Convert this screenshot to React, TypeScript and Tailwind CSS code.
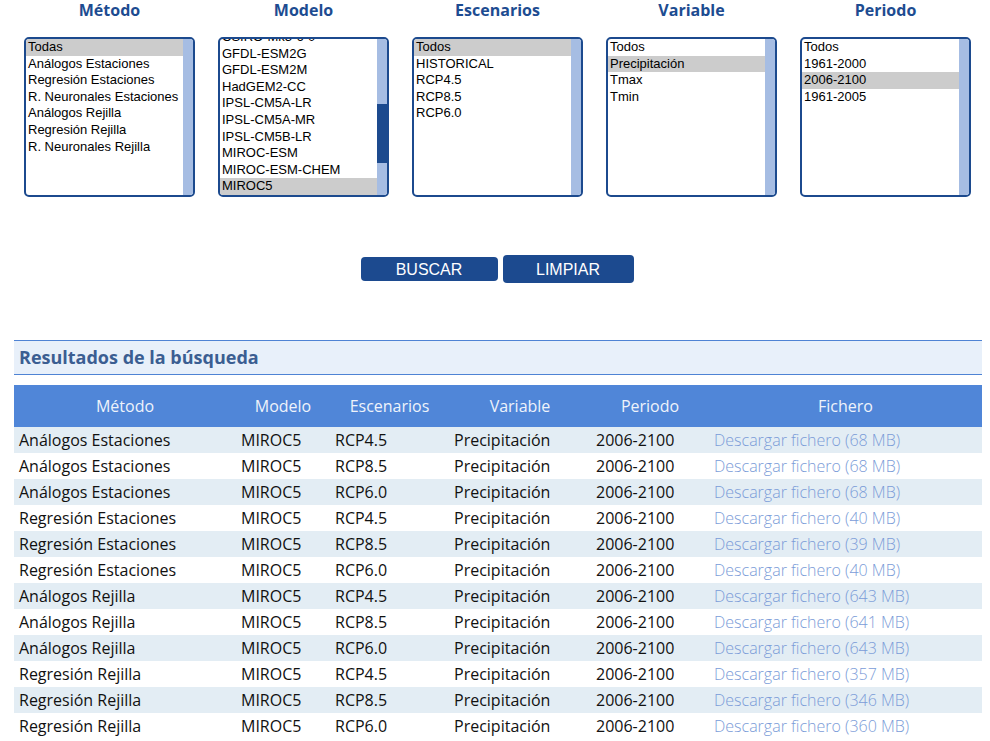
import React from "react";

type Col = {
  title: string;
  items: string[];
  selected: string;
  bottom?: boolean;
  thumb?: [number, number];
};

const cols: Col[] = [
  {
    title: "Método",
    items: [
      "Todas",
      "Análogos Estaciones",
      "Regresión Estaciones",
      "R. Neuronales Estaciones",
      "Análogos Rejilla",
      "Regresión Rejilla",
      "R. Neuronales Rejilla",
    ],
    selected: "Todas",
  },
  {
    title: "Modelo",
    items: [
      "CNRM-CM5",
      "CSIRO-Mk3-6-0",
      "GFDL-ESM2G",
      "GFDL-ESM2M",
      "HadGEM2-CC",
      "IPSL-CM5A-LR",
      "IPSL-CM5A-MR",
      "IPSL-CM5B-LR",
      "MIROC-ESM",
      "MIROC-ESM-CHEM",
      "MIROC5",
    ],
    selected: "MIROC5",
    bottom: true,
    thumb: [65, 59],
  },
  {
    title: "Escenarios",
    items: ["Todos", "HISTORICAL", "RCP4.5", "RCP8.5", "RCP6.0"],
    selected: "Todos",
  },
  {
    title: "Variable",
    items: ["Todos", "Precipitación", "Tmax", "Tmin"],
    selected: "Precipitación",
  },
  {
    title: "Periodo",
    items: ["Todos", "1961-2000", "2006-2100", "1961-2005"],
    selected: "2006-2100",
  },
];

const rows: string[][] = [
  ["Análogos Estaciones", "RCP4.5", "68 MB"],
  ["Análogos Estaciones", "RCP8.5", "68 MB"],
  ["Análogos Estaciones", "RCP6.0", "68 MB"],
  ["Regresión Estaciones", "RCP4.5", "40 MB"],
  ["Regresión Estaciones", "RCP8.5", "39 MB"],
  ["Regresión Estaciones", "RCP6.0", "40 MB"],
  ["Análogos Rejilla", "RCP4.5", "643 MB"],
  ["Análogos Rejilla", "RCP8.5", "641 MB"],
  ["Análogos Rejilla", "RCP6.0", "643 MB"],
  ["Regresión Rejilla", "RCP4.5", "357 MB"],
  ["Regresión Rejilla", "RCP8.5", "346 MB"],
  ["Regresión Rejilla", "RCP6.0", "360 MB"],
];

const widths = ["w-[222px]", "w-[94px]", "w-[119px]", "w-[142px]", "w-[118px]", "w-[273px]"];
const headers = ["Método", "Modelo", "Escenarios", "Variable", "Periodo", "Fichero"];

function ListBox({ col }: { col: Col }) {
  return (
    <div className="flex w-[171px] flex-col items-center">
      <div className="text-[16px] font-bold leading-[20px] text-[#1d4c91]">{col.title}</div>
      <div className="mt-[17px] flex h-[160px] w-[171px] overflow-hidden rounded-[5px] border-2 border-[#1c4a8e] bg-white">
        <div
          className={
            "flex flex-1 flex-col overflow-hidden " + (col.bottom ? "justify-end" : "justify-start")
          }
        >
          {col.items.map((it) => (
            <div
              key={it}
              className={
                "h-[16.6px] shrink-0 whitespace-nowrap pl-[2px] text-[13px] leading-[16.6px] text-black " +
                (it === col.selected ? "bg-[#cccccc] text-[#222]" : "")
              }
              style={{ fontFamily: '"Liberation Sans", Arial, sans-serif' }}
            >
              {it}
            </div>
          ))}
        </div>
        <div className="flex w-[10px] shrink-0 flex-col bg-[#a6bde3]">
          {col.thumb && (
            <>
              <div className="h-[65px] shrink-0" />
              <div className="h-[59px] shrink-0 bg-[#1c4a8e]" />
            </>
          )}
        </div>
      </div>
    </div>
  );
}

export default function App() {
  return (
    <div
      className="w-[990px] bg-white"
      style={{ fontFamily: '"Open Sans", "Liberation Sans", sans-serif' }}
    >
      <div className="flex gap-[23px] pl-[24px]">
        {cols.map((c) => (
          <ListBox key={c.title} col={c} />
        ))}
      </div>

      <div
        className="mt-[58px] flex items-center justify-center gap-[5px] pl-[4px]"
        style={{ fontFamily: '"Liberation Sans", Arial, sans-serif' }}
      >
        <button className="flex h-[24px] w-[137px] items-center justify-center rounded-[4px] bg-[#1c4a8f] pt-[1px] text-[16px] text-white">
          BUSCAR
        </button>
        <button className="flex h-[28px] w-[131px] items-center justify-center rounded-[4px] bg-[#1c4a8f] pt-[1px] text-[16px] text-white">
          LIMPIAR
        </button>
      </div>

      <div className="ml-[14px] mt-[57px] w-[968px]">
        <div className="flex h-[35px] items-center border-y border-[#4f83d4] bg-[#e8f0fa] pl-[5px]">
          <span className="text-[18px] font-bold text-[#3b5e92]">Resultados de la búsqueda</span>
        </div>

        <div className="mt-[10px]">
          <div className="flex h-[42px] items-center bg-[#5086d8] text-[16px] text-[#eef3fb]">
            {headers.map((h, i) => (
              <div key={h} className={widths[i] + " shrink-0 text-center"}>
                {h}
              </div>
            ))}
          </div>
          {rows.map((r, idx) => {
            const cells = [r[0], "MIROC5", r[1], "Precipitación", "2006-2100"];
            return (
              <div
                key={idx}
                className={
                  "flex h-[26px] items-center text-[16px] text-[#111]" +
                  (idx % 2 === 0 ? " bg-[#e3edf4]" : " bg-white")
                }
              >
                {cells.map((c, i) => (
                  <div key={i} className={widths[i] + " shrink-0 whitespace-nowrap pl-[5px]"}>
                    {c}
                  </div>
                ))}
                <div className={widths[5] + " shrink-0 whitespace-nowrap pl-[5px] font-light text-[#7b9cd8]"}>
                  Descargar fichero ({r[2]})
                </div>
              </div>
            );
          })}
        </div>
      </div>
    </div>
  );
}
